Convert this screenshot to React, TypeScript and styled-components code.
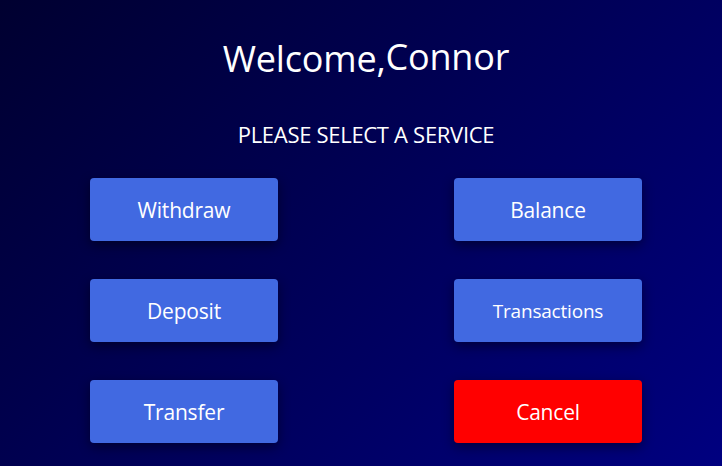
import React from 'react';
import styled, { createGlobalStyle } from 'styled-components';

const GlobalStyle = createGlobalStyle`
  html, body {
    margin: 0;
    padding: 0;
    height: 100%;
  }
  body {
    font-family: 'Open Sans', 'Noto Sans', sans-serif;
    background: linear-gradient(135deg, #000030 0%, #000080 100%);
    color: #ffffff;
  }
`;

const Screen = styled.div`
  width: 722px;
  height: 466px;
  box-sizing: border-box;
  padding: 33px 0 0 10px;
  display: flex;
  flex-direction: column;
  align-items: center;
`;

const Title = styled.h1`
  margin: 0;
  font-size: 36px;
  font-weight: 400;
  line-height: 48px;
  letter-spacing: -0.2px;
`;

const UserName = styled.span`
  vertical-align: 2px;
`;

const Subtitle = styled.h2`
  margin: 36px 0 0;
  font-size: 22px;
  font-weight: 400;
  line-height: 30px;
  letter-spacing: -0.3px;
`;

const Options = styled.div`
  margin-top: 29px;
  display: grid;
  grid-template-columns: 188px 188px;
  column-gap: 176px;
  row-gap: 38px;
`;

const ServiceButton = styled.button<{ $danger?: boolean; $small?: boolean }>`
  height: 63px;
  border: none;
  border-radius: 4px;
  background: ${(p) => (p.$danger ? '#ff0000' : '#4169e1')};
  color: #ffffff;
  font-family: inherit;
  font-size: ${(p) => (p.$small ? '19px' : '21px')};
  letter-spacing: -0.2px;
  box-shadow: 0 4px 12px rgba(0, 0, 0, 0.45);
  cursor: pointer;
`;

const services = [
  { label: 'Withdraw' },
  { label: 'Balance' },
  { label: 'Deposit' },
  { label: 'Transactions', small: true },
  { label: 'Transfer' },
  { label: 'Cancel', danger: true },
];

function App() {
  return (
    <>
      <GlobalStyle />
      <Screen>
        <Title>
          Welcome,<UserName>Connor</UserName>
        </Title>
        <Subtitle>PLEASE SELECT A SERVICE</Subtitle>
        <Options>
          {services.map((s) => (
            <ServiceButton key={s.label} $danger={s.danger} $small={s.small}>
              {s.label}
            </ServiceButton>
          ))}
        </Options>
      </Screen>
    </>
  );
}

export default App;
